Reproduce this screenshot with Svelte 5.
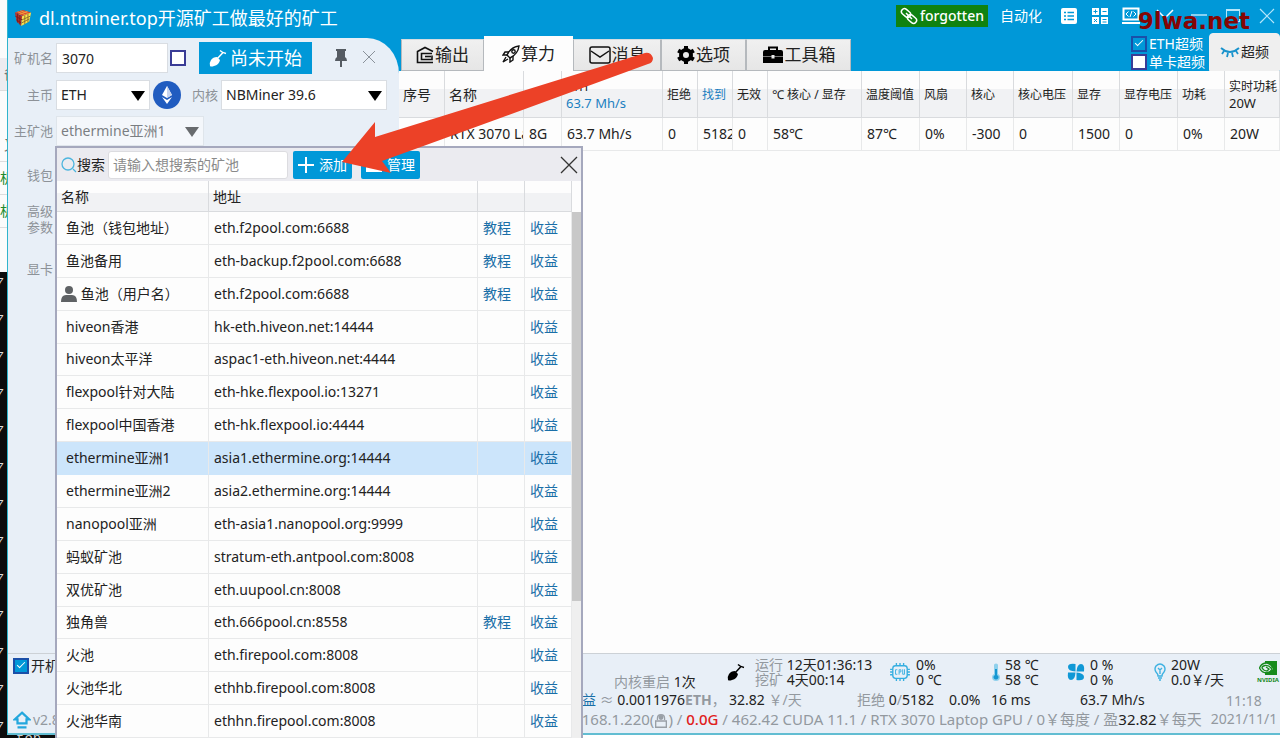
<script lang="ts">
  type Pool = { name: string; url: string; guide?: boolean; user?: boolean };

  const pools: Pool[] = [
    { name: '鱼池（钱包地址）', url: 'eth.f2pool.com:6688', guide: true },
    { name: '鱼池备用', url: 'eth-backup.f2pool.com:6688', guide: true },
    { name: '鱼池（用户名）', url: 'eth.f2pool.com:6688', guide: true, user: true },
    { name: 'hiveon香港', url: 'hk-eth.hiveon.net:14444' },
    { name: 'hiveon太平洋', url: 'aspac1-eth.hiveon.net:4444' },
    { name: 'flexpool针对大陆', url: 'eth-hke.flexpool.io:13271' },
    { name: 'flexpool中国香港', url: 'eth-hk.flexpool.io:4444' },
    { name: 'ethermine亚洲1', url: 'asia1.ethermine.org:14444' },
    { name: 'ethermine亚洲2', url: 'asia2.ethermine.org:14444' },
    { name: 'nanopool亚洲', url: 'eth-asia1.nanopool.org:9999' },
    { name: '蚂蚁矿池', url: 'stratum-eth.antpool.com:8008' },
    { name: '双优矿池', url: 'eth.uupool.cn:8008' },
    { name: '独角兽', url: 'eth.666pool.cn:8558', guide: true },
    { name: '火池', url: 'eth.firepool.com:8008' },
    { name: '火池华北', url: 'ethhb.firepool.com:8008' },
    { name: '火池华南', url: 'ethhn.firepool.com:8008' },
  ];

  const gpuColumns = [
    { title: '序号', value: '', width: 46, big: true },
    { title: '名称', value: 'RTX 3070 Laptop GPU', width: 79, big: true },
    { title: '显存', value: '8G', width: 38 },
    { title: 'ETH', sub: '63.7 Mh/s', value: '63.7 Mh/s', width: 101 },
    { title: '拒绝', value: '0', width: 35 },
    { title: '找到', value: '5182', width: 35, blue: true },
    { title: '无效', value: '0', width: 35 },
    { title: '℃ 核心 / 显存', value: '58℃', width: 94 },
    { title: '温度阈值', value: '87℃', width: 58 },
    { title: '风扇', value: '0%', width: 47 },
    { title: '核心', value: '-300', width: 47 },
    { title: '核心电压', value: '0', width: 59 },
    { title: '显存', value: '1500', width: 47 },
    { title: '显存电压', value: '0', width: 58 },
    { title: '功耗', value: '0%', width: 47 },
    { title: '实时功耗', sub: '20W', value: '20W', width: 55 },
  ];

  const consoleLines = Array(13).fill('7');

  let selected = $state('ethermine亚洲1');
  let search = $state('');
  let rigName = $state('3070');
</script>

<div class="desktop">
  <div class="behind">
    <div class="sheet">
      <span class="cell head">备</span>
      <span class="cell">又</span>
      <span class="cell green">机</span>
      <span class="cell green">机</span>
    </div>
    <div class="console">
      {#each consoleLines as line}
        <span>{line}</span>
      {/each}
    </div>
  </div>

  <div class="window">
    <header class="titlebar">
      <svg class="logo" viewBox="0 0 20 20">
        <path d="M1 4L10 1L19 4L10 8Z" fill="#d9482c" />
        <path d="M1 4L9 8L8 19L3 14Z" fill="#b5302a" />
        <path d="M9 8L19 4L17 14L8 19Z" fill="#f9e04a" />
        <path d="M12 7V17M15.500 5.500V15M9 12L18 8M8.500 15.500L17 11" stroke="#8a6a2a" />
        <path d="M4 5V15M6.500 6.500V17M1.500 8L9 12M2.500 12L8 15.500" stroke="#7a1c1c" />
        <path d="M4 3L13 6.500M7 2L16 5M6 6L15 2.500" stroke="#f0a040" />
      </svg>
      <h1>dl.ntminer.top开源矿工做最好的矿工</h1>
      <button class="user">
        <svg viewBox="0 0 18 18" fill="none" stroke="#fff" stroke-width="1.500">
          <rect x="1" y="3" width="10" height="6" rx="3" transform="rotate(40 6 6)" />
          <rect x="7" y="9" width="10" height="6" rx="3" transform="rotate(40 12 12)" />
          <path d="M6 6L12 12" />
        </svg>
        forgotten
      </button>
      <button class="auto">自动化</button>
      <div class="tools">
        <button aria-label="列表">
          <svg viewBox="0 0 18 18">
            <rect x="1" y="1" width="16" height="16" rx="2" fill="#fff" />
            <path d="M4 5.500H6M4 9H6M4 12.500H6M7.500 5.500H14M7.500 9H14M7.500 12.500H14" stroke="#0098d8" stroke-width="1.500" />
          </svg>
        </button>
        <button aria-label="计算器">
          <svg viewBox="0 0 18 18">
            <path d="M1 1H8V8H1ZM10 1H17V8H10ZM1 10H8V17H1ZM10 10H17V17H10Z" fill="#fff" />
            <path d="M2.500 4.500H6.500M4.500 2.500V6.500M11.500 4.500H15.500M3 12L6 15M6 12L3 15M11.500 12.500H15.500M11.500 15H15.500" stroke="#0098d8" />
          </svg>
        </button>
        <button aria-label="开发">
          <svg viewBox="0 0 18 18" fill="none" stroke="#fff">
            <rect x="1.500" y="1.500" width="15" height="11" stroke-width="2" />
            <path d="M6.500 4.500L4 7L6.500 9.500M11.500 4.500L14 7L11.500 9.500M10 4L8 10" />
            <path d="M0 16H18" stroke-width="2" />
          </svg>
        </button>
        <button aria-label="皮肤">
          <svg viewBox="0 0 18 18" fill="none" stroke="#fff" stroke-width="1.500"><path d="M1 3L9 11L17 3" /></svg>
        </button>
        <button aria-label="最小化">
          <svg viewBox="0 0 18 18" stroke="#b5e6fa" stroke-width="1.500"><path d="M1 8H17" /></svg>
        </button>
        <button aria-label="最大化">
          <svg viewBox="0 0 18 18" fill="none" stroke="#b5e6fa"><rect x="2.500" y="2.500" width="13" height="12" /><path d="M2 3H16" stroke-width="2" /></svg>
        </button>
        <button aria-label="关闭">
          <svg viewBox="0 0 18 18" stroke="#b5e6fa" stroke-width="1.200"><path d="M2 2L16 16M16 2L2 16" /></svg>
        </button>
      </div>
    </header>

    <div class="body">
      <form class="side">
        <div class="row first">
          <label for="rig">矿机名</label>
          <input id="rig" class="field rig" bind:value={rigName} />
          <input type="checkbox" class="check" aria-label="矿机名" />
          <button type="button" class="start">
            <svg viewBox="0 0 18 18" fill="#fff">
              <path d="M8 8L11 11Q10 16 5 17Q2 18 1 17Q0 14 2 11Q4 8 8 8Z" />
              <path d="M8 10L14 3.500M11 1.500Q13 3.500 17 4.500" stroke="#fff" stroke-width="1.500" fill="none" />
            </svg>
            尚未开始
          </button>
          <button type="button" class="icon pin" aria-label="固定">
            <svg viewBox="0 0 14 20" fill="#555b62"><path d="M2 1H12V3H11V9Q13 10 13 13H8V19H6V13H1Q1 10 3 9V3H2Z" /></svg>
          </button>
          <button type="button" class="icon" aria-label="收起">
            <svg viewBox="0 0 14 14" stroke="#8a929a"><path d="M1 1L13 13M13 1L1 13" /></svg>
          </button>
        </div>
        <div class="row">
          <label for="coin">主币</label>
          <div class="select coin">
            <select id="coin" class="field"><option>ETH</option></select>
            <svg viewBox="0 0 14 10"><path d="M0 0H14L7 10Z" /></svg>
          </div>
          <svg class="eth" viewBox="0 0 28 28">
            <circle cx="14" cy="14" r="14" fill="#205cc0" />
            <path d="M14 5L19 14L14 17L9 14Z" fill="#fff" />
            <path d="M9 16L14 19L19 16L14 23Z" fill="#fff" />
            <path d="M14 5V17L19 14Z" fill="#c5d3ee" />
          </svg>
          <label class="kernel" for="kernel">内核</label>
          <div class="select kernel-box">
            <select id="kernel" class="field"><option>NBMiner 39.6</option></select>
            <svg viewBox="0 0 14 10"><path d="M0 0H14L7 10Z" /></svg>
          </div>
        </div>
        <div class="row">
          <label for="pool">主矿池</label>
          <div class="select pool">
            <select id="pool" class="field"><option>ethermine亚洲1</option></select>
            <svg viewBox="0 0 14 10"><path d="M0 0H14L7 10Z" /></svg>
          </div>
        </div>
        <div class="row wallet"><span class="name">钱包</span></div>
        <div class="row"><span class="name">高级<br />参数</span></div>
        <div class="row card"><span class="name">显卡</span></div>
      </form>

      <main>
        <nav>
          <button class="tab output">
            <svg viewBox="0 0 18 18" fill="none" stroke="#111" stroke-width="1.600">
              <path d="M17 16.500H1.500V5.500L9 1.500L17 5.500" />
              <path d="M16 7.500H5.500V13.500H16V9.500" />
              <path d="M9 10.500H15" />
            </svg>
            输出
          </button>
          <button class="tab active">
            <svg viewBox="0 0 18 18" fill="none" stroke="#111" stroke-width="1.400">
              <path d="M5 10Q9 2 17 1Q16 9 8 13Z" />
              <circle cx="11.500" cy="6.500" r="1.700" />
              <path d="M7 7H3L1 10L5 10M11 11V15L8 17V13M4 12L1 17L6 14" />
            </svg>
            算力
          </button>
          <button class="tab message">
            <svg class="wide" viewBox="0 0 22 18" fill="none" stroke="#111" stroke-width="1.500">
              <rect x="1" y="1" width="20" height="16" rx="2" />
              <path d="M2 5L11 11L20 5" />
            </svg>
            消息
          </button>
          <button class="tab option">
            <svg viewBox="0 0 18 18">
              <circle cx="9" cy="9" r="5" fill="none" stroke="#000" stroke-width="4" />
              <path d="M9 0V4M9 14V18M1.200 4.500L4.700 6.500M13.300 11.500L16.800 13.500M1.200 13.500L4.700 11.500M13.300 6.500L16.800 4.500" stroke="#000" stroke-width="4" />
            </svg>
            选项
          </button>
          <button class="tab toolbox">
            <svg class="wide" viewBox="0 0 22 18">
              <path d="M7 4V1.500H15V4" fill="none" stroke="#000" stroke-width="2" />
              <path d="M3 4H19Q21 4 21 6V10H12.500V9H9.500V10H1V6Q1 4 3 4ZM1 10.500H9.500V12.500H12.500V10.500H21V17H1Z" />
            </svg>
            工具箱
          </button>
          <div class="overclock">
            <label><input type="checkbox" class="check" checked />ETH超频</label>
            <label><input type="checkbox" class="check" />单卡超频</label>
          </div>
          <button class="tab oc">
            <svg class="eye" viewBox="0 0 20 14" fill="none" stroke="#1a93cc" stroke-width="1.800">
              <path d="M1 3Q10 11 19 3M4 6L2 9M8 8L7 12M12 8L13 12M16 6L18 9" />
            </svg>
            超频
          </button>
        </nav>

        <table class="gpus">
          <thead>
            <tr>
              {#each gpuColumns as col}
                <th style:width="{col.width}px" class:big={col.big} class:blue={col.blue}>
                  {col.title}
                  {#if col.sub}
                    <span class="sub" class:blue={col.title === 'ETH'}>{col.sub}</span>
                  {/if}
                </th>
              {/each}
            </tr>
          </thead>
          <tbody>
            <tr>
              {#each gpuColumns as col}
                <td>{col.value}</td>
              {/each}
            </tr>
          </tbody>
        </table>
      </main>
    </div>

    <footer>
      <div class="startup">
        <label><input type="checkbox" class="check" checked />开机启动</label>
        <a class="version" href="#version">
          <svg viewBox="0 0 16 16" fill="none" stroke="#23a7dd" stroke-width="2">
            <path d="M8 1.500L14.500 7.500H12V11H4V7.500H1.500ZM4 14.500H12" />
          </svg>
          v2.8
        </a>
      </div>
      <div class="status">
        <div class="stats">
          <div class="restart"><i>内核重启</i> 1次</div>
          <div class="stat uptime">
            <svg viewBox="0 0 18 18">
              <path d="M8 8L11 11Q10 16 5 17Q2 18 1 17Q0 14 2 11Q4 8 8 8Z" />
              <path d="M8 10L14 3.500M11 1.500Q13 3.500 17 4.500" stroke="#000" stroke-width="1.500" fill="none" />
            </svg>
            <p><i>运行</i> 12天01:36:13<br /><i>挖矿</i> 4天00:14</p>
          </div>
          <div class="stat">
            <svg class="wide" viewBox="0 0 22 20" fill="none" stroke="#35aee0" stroke-width="1.500">
              <rect x="3" y="3" width="16" height="14" rx="3" />
              <path d="M7 0V3M11 0V3M15 0V3M7 17V20M11 17V20M15 17V20M0 7H3M0 10H3M0 13H3M19 7H22M19 10H22M19 13H22" />
              <path d="M8 7.500H6V12.500H8M10 13V7.500H12V10H10M14 7V12.500H16V7" stroke-width="1" />
            </svg>
            <p>0%<br />0 ℃</p>
          </div>
          <div class="stat">
            <svg class="thin" viewBox="0 0 8 18">
              <path d="M2 2Q2 0.500 4 0.500T6 2V11Q8 12 8 14Q8 18 4 18T0 14Q0 12 2 11Z" fill="#8fd0ec" />
              <path d="M3 6H5V12Q7 13 6.500 15Q4 18 1.500 15Q1 13 3 12Z" fill="#1597d2" />
            </svg>
            <p>58 ℃<br />58 ℃</p>
          </div>
          <div class="stat">
            <svg viewBox="0 0 18 18" fill="#0f98d6">
              <path d="M8.500 8.500V1Q1 0 1 4T8.500 8.500ZM9.500 8.500H17Q18 1 14 1T9.500 8.500ZM9.500 9.500V17Q17 18 17 14T9.500 9.500ZM8.500 9.500H1Q0 17 4 17T8.500 9.500Z" />
            </svg>
            <p>0 %<br />0 %</p>
          </div>
          <div class="stat">
            <svg class="bulb" viewBox="0 0 12 18" fill="none" stroke="#3fb2e2" stroke-width="1.400">
              <path d="M4 13Q4 11 2 9Q0 6 2 3Q6 -1 10 3Q12 6 10 9Q8 11 8 13ZM4 15H8M5 17H7M6 11V6M4 5L6 7L8 5" />
            </svg>
            <p>20W<br />0.0￥/天</p>
          </div>
          <div class="nvidia">
            <svg viewBox="0 0 18 16">
              <path d="M6 1H18V15H6V12Q10 13 14 9Q10 3 6 4Z" fill="#178a1d" />
              <path d="M6 3Q2 4 0.500 8Q3 13 8 13Q12 12 13 9Q10 5 6 5.500Q3 6 3 8Q5 11 8 11L10 9L7 7" fill="none" stroke="#178a1d" stroke-width="1.300" />
            </svg>
            <b>NVIDIA</b>
          </div>
        </div>
        <div class="lines">
          <div class="line">
            <span class="profit"><a href="#profit">收益</a> <i>≈</i> 0.0011976<i><b>ETH</b>，</i></span>
            <span class="money">32.82 <i>￥/天</i></span>
            <span class="reject"><i>拒绝</i> 0<i>/</i>5182</span>
            <span class="rate">0.0%</span>
            <span class="ping">16 ms</span>
            <span>63.7 Mh/s</span>
          </div>
          <div class="line net">
            <i>192.168.1.220(<svg viewBox="0 0 14 18" fill="none" stroke="#999fa6" stroke-width="1.500"><path d="M3 8V6Q3 2 7 2T11 6V8M1 9H13V16H1Z" /><circle cx="7" cy="5" r="2" fill="#999fa6" /></svg>) /{' '}</i><em>0.0G</em><i>{' '}/ 462.42 CUDA 11.1 / RTX 3070 Laptop GPU / 0￥每度 / 盈</i>32.82<i>￥每天</i>
          </div>
          <div class="clock">11:18<br />2021/11/1</div>
        </div>
      </div>
    </footer>
  </div>

  <div class="under"><span>top.</span></div>

  <section class="popup">
    <div class="toolbar">
      <svg class="glass" viewBox="0 0 16 16" fill="none" stroke="#4db5de" stroke-width="1.300">
        <circle cx="7" cy="7" r="6" /><path d="M12 12L15 15" />
      </svg>
      <label for="search">搜索</label>
      <input id="search" class="search" placeholder="请输入想搜索的矿池" bind:value={search} />
      <button class="add">
        <svg viewBox="0 0 16 16" stroke="#fff" stroke-width="2"><path d="M8 0V16M0 8H16" /></svg>
        添加
      </button>
      <button class="manage">
        <svg viewBox="0 0 16 16" fill="#fff"><path d="M0 1H16V15H0Z" /></svg>
        管理
      </button>
      <button class="close" aria-label="关闭">
        <svg viewBox="0 0 18 18" stroke="#333" stroke-width="1.300"><path d="M1 1L17 17M17 1L1 17" /></svg>
      </button>
    </div>
    <div class="list">
      <table class="pools">
        <thead>
          <tr><th class="c-name">名称</th><th>地址</th><th class="c-guide"></th><th class="c-profit"></th></tr>
        </thead>
        <tbody>
          {#each pools as pool}
            <tr class:selected={pool.name === selected} onclick={() => (selected = pool.name)}>
              <td class="pool-name">
                {#if pool.user}
                  <svg viewBox="0 0 16 16" fill="#5f6265"><circle cx="8" cy="4" r="4" /><path d="M0 16Q0 9 5 9H11Q16 9 16 16Z" /></svg>
                {/if}
                {pool.name}
              </td>
              <td>{pool.url}</td>
              <td>{#if pool.guide}<a href="#guide">教程</a>{/if}</td>
              <td><a href="#income">收益</a></td>
            </tr>
          {/each}
        </tbody>
      </table>
      <div class="scroll"><div class="thumb"></div></div>
    </div>
  </section>

  <svg class="arrow" viewBox="0 0 312 124">
    <path d="M1 111L34 71V86L304 2Q310 1 312 7Q312 12 307 13L99 89L41 110L50 122Z" fill="#ec4127" />
  </svg>
  <div class="watermark">9lwa.net</div>
</div>

<style>
  :global(body) {
    margin: 0;
  }
  .desktop {
    position: relative;
    display: grid;
    grid-template-columns: 7px minmax(0, 1fr);
    grid-template-rows: minmax(0, 1fr) 3px;
    height: 100vh;
    overflow: hidden;
    background: #0c0c0c;
    color: #222;
    font: 14px/16px 'Noto Sans', 'Noto Sans CJK SC', sans-serif;
  }
  button,
  input,
  select {
    font: inherit;
    color: inherit;
    box-sizing: border-box;
    margin: 0;
  }
  button {
    padding: 0;
    border: none;
    background: none;
    white-space: nowrap;
  }
  svg {
    flex: none;
    width: 18px;
    height: 18px;
  }
  svg.wide {
    width: 22px;
  }
  a {
    color: #1a6fa8;
    text-decoration: none;
  }
  i,
  em {
    font-style: normal;
    color: #93999f;
  }

  .behind {
    grid-row: 1 / 3;
    overflow: hidden;
  }
  .sheet {
    height: 272px;
    box-sizing: border-box;
    padding-top: 58px;
    background: #fbfbfb;
  }
  .cell {
    display: block;
    height: 32px;
    padding-left: 4px;
    line-height: 32px;
    border-bottom: 1px solid #ddd;
    color: #777;
    white-space: nowrap;
  }
  .cell.head {
    margin-bottom: 38px;
    background: #ececf0;
  }
  .cell.green {
    padding: 0;
    color: #218a2c;
  }
  .console {
    display: flex;
    flex-direction: column;
    color: #ddd;
    font: italic 12px/24px 'Liberation Mono', monospace;
  }
  .console span {
    height: 37px;
    text-indent: -4px;
  }

  .window {
    display: flex;
    flex-direction: column;
    min-width: 0;
    box-sizing: border-box;
    border-left: 1px solid #2fb4cc;
    border-bottom: 2px solid #62bdd2;
    background: #0098d8;
  }
  .under {
    grid-column: 2;
    background: linear-gradient(90deg, #0c0c0c 560px, #fff 560px);
    overflow: hidden;
  }
  .under span {
    display: block;
    padding-left: 9px;
    color: #ccc;
    font: 14px/8px 'Liberation Mono', monospace;
  }

  .titlebar {
    display: flex;
    align-items: center;
    height: 36px;
    padding: 0 4px 0 6px;
    color: #fff;
  }
  .logo {
    margin-right: 7px;
  }
  h1 {
    flex: 1;
    margin: 0;
    font-size: 18px;
    line-height: 24px;
    font-weight: 400;
  }
  .user {
    display: flex;
    align-items: center;
    gap: 2px;
    height: 22px;
    padding: 0 4px;
    margin-bottom: 4px;
    background: #108210;
    font-weight: 500;
  }
  .auto {
    width: 66px;
    margin-bottom: 4px;
  }
  .tools {
    display: flex;
    gap: 13px;
    margin-left: 6px;
  }
  .tools button {
    height: 18px;
    width: 18px;
    margin-bottom: 4px;
  }
  .tools button:nth-child(n + 4) {
    margin-left: 3px;
  }

  .body {
    flex: 1;
    display: flex;
    min-height: 0;
  }
  .side {
    display: flex;
    flex-direction: column;
    gap: 6px;
    flex: 0 0 391px;
    box-sizing: border-box;
    margin-top: 2px;
    padding-top: 4px;
    border-top-right-radius: 32px 36px;
    background: #e8eff7;
  }
  .row {
    display: flex;
    align-items: center;
    height: 30px;
  }
  .row.first {
    height: 32px;
  }
  .row.wallet {
    height: 46px;
  }
  .row.card {
    height: 58px;
  }
  .row > label,
  .name {
    flex: 0 0 45px;
    margin-right: 3px;
    color: #8d9298;
    font-size: 13px;
    text-align: right;
  }
  .row > label.kernel {
    flex-basis: 37px;
  }
  .field {
    width: 100%;
    height: 30px;
    padding: 0 5px;
    border: 1px solid #d9dde2;
    border-radius: 0;
    background: #fff;
    appearance: none;
  }
  select.field {
    padding: 0 4px;
  }
  .rig {
    width: 112px;
  }
  .check {
    flex: none;
    appearance: none;
    width: 16px;
    height: 16px;
    border: 2px solid #3a3c96;
    background: #fff;
  }
  .check:checked {
    background: #0098d8;
    border-color: #1a4fa8;
  }
  .check:checked::after {
    content: '';
    display: block;
    width: 7px;
    height: 3px;
    margin: 2px;
    border: solid #fff;
    border-width: 0 0 1px 1px;
    transform: rotate(-45deg);
  }
  .row .check {
    margin-left: 2px;
  }
  .start {
    display: flex;
    align-items: center;
    justify-content: center;
    gap: 3px;
    width: 113px;
    height: 32px;
    margin-left: 13px;
    background: #0098d8;
    color: #fff;
    font-size: 18px;
  }
  .icon {
    width: 14px;
    height: 20px;
    margin-left: 14px;
  }
  .icon svg {
    width: 14px;
  }
  .icon.pin {
    margin-left: 22px;
  }
  .icon.pin svg {
    height: 20px;
  }
  .select {
    position: relative;
    width: 94px;
  }
  .select svg {
    position: absolute;
    right: 5px;
    top: 11px;
    width: 14px;
    height: 10px;
    pointer-events: none;
  }
  .select.kernel-box {
    width: 166px;
  }
  .select.pool {
    width: 148px;
    opacity: 0.55;
  }
  .eth {
    width: 28px;
    height: 28px;
    margin-left: 3px;
  }

  main {
    flex: 1;
    min-width: 0;
    display: flex;
    flex-direction: column;
    background: linear-gradient(#0098d8 35px, #fdfdfd 35px);
  }
  nav {
    display: flex;
    align-items: flex-end;
    height: 35px;
    padding-left: 2px;
  }
  .tab {
    display: flex;
    align-items: center;
    justify-content: center;
    gap: 1px;
    width: 83px;
    height: 32px;
    border: 1px solid #b5b9bd;
    border-top-color: #d5dce0;
    background: linear-gradient(#f0f0f0, #e6e6e6);
    color: #222;
    font-size: 17px;
  }
  .tab.active {
    width: 89px;
    height: 35px;
    border-color: #fdfdfd;
    background: #fdfdfd;
  }
  .tab.message {
    width: 88px;
  }
  .tab.option {
    width: 85px;
  }
  .tab.toolbox {
    width: 105px;
  }
  .overclock {
    margin-left: auto;
    margin-right: 4px;
    color: #fff;
  }
  .overclock label,
  .startup label {
    display: flex;
    align-items: center;
    gap: 2px;
    height: 18px;
  }
  .tab.oc {
    width: 71px;
    height: 38px;
    font-size: 14px;
    border-color: #efefef;
    border-radius: 4px 4px 0 0;
    background: #efefef;
  }
  .eye {
    width: 20px;
    height: 14px;
  }

  table {
    border-collapse: separate;
    border-spacing: 0;
    table-layout: fixed;
    width: 100%;
  }
  th {
    box-sizing: border-box;
    text-align: left;
    font-weight: 400;
    border: solid #d9dbde;
    border-width: 0 1px 1px 0;
    background: linear-gradient(#fdfdfd 40%, #f1f2f4 40%);
  }
  td {
    border: solid #e8e9ea;
    border-width: 0 1px 1px 0;
    overflow: hidden;
    white-space: nowrap;
  }
  .gpus th {
    height: 47px;
    padding: 2px 0 0 4px;
    font-size: 12px;
    white-space: nowrap;
    overflow: hidden;
  }
  .gpus th.big {
    font-size: 14px;
  }
  .gpus td {
    height: 33px;
    padding: 0 0 0 5px;
    box-sizing: border-box;
  }
  .sub {
    display: block;
    font-size: 13px;
  }
  .blue {
    color: #1c7fc0;
  }

  footer {
    display: flex;
    height: 80px;
    box-sizing: border-box;
    border-top: 1px solid #ccd1d6;
    background: #e8eff7;
  }
  .startup {
    display: flex;
    flex-direction: column;
    justify-content: space-between;
    flex: 0 0 544px;
    box-sizing: border-box;
    padding: 3px 5px 4px;
  }
  .version {
    display: flex;
    align-items: center;
    gap: 2px;
    color: #93999f;
  }
  .status {
    flex: 1;
    min-width: 0;
    white-space: nowrap;
  }
  .stats {
    display: grid;
    grid-template-columns: 113px 162px 103px 75px 87px 102px 1fr;
    height: 36px;
    padding-left: 62px;
  }
  .stats p {
    margin: 0;
    line-height: 15px;
  }
  .restart {
    align-self: end;
  }
  .stat {
    display: flex;
    align-items: center;
    gap: 5px;
  }
  .stat.uptime {
    gap: 10px;
  }
  .stat .thin {
    width: 8px;
  }
  .stat .bulb {
    width: 12px;
  }
  .nvidia {
    display: flex;
    flex-direction: column;
    align-items: center;
    justify-content: center;
    color: #178a1d;
    font-size: 6px;
    line-height: 8px;
  }
  .nvidia svg {
    height: 16px;
  }
  .lines {
    display: grid;
    grid-template-columns: minmax(0, 1fr) 72px;
    grid-template-rows: 20px 20px;
    align-items: center;
  }
  .line {
    display: flex;
    align-items: center;
    padding-left: 16px;
  }
  .line.net {
    grid-row: 2;
    display: block;
    padding-left: 0;
    font-size: 15px;
  }
  .net svg {
    width: 14px;
    height: 16px;
    vertical-align: -4px;
  }
  .net em {
    color: #e02020;
    font-weight: 500;
  }
  .profit {
    width: 161px;
  }
  .money {
    width: 128px;
  }
  .reject {
    width: 92px;
  }
  .rate {
    width: 42px;
  }
  .ping {
    width: 89px;
  }
  .clock {
    grid-column: 2;
    grid-row: 1 / 3;
    color: #93999f;
    text-align: center;
    line-height: 18px;
    overflow: hidden;
  }

  .popup {
    position: absolute;
    left: 55px;
    top: 146px;
    bottom: 0;
    width: 528px;
    display: flex;
    flex-direction: column;
    box-sizing: border-box;
    border: 2px solid #a5a8bd;
    border-bottom: none;
    background: #fdfdfd;
  }
  .toolbar {
    display: flex;
    align-items: center;
    height: 33px;
    padding: 0 3px 0 4px;
    background: #ebebf0;
  }
  .glass {
    width: 16px;
    height: 16px;
  }
  .search {
    width: 180px;
    height: 28px;
    margin: 0 5px 0 3px;
    padding: 0 4px;
    border: 1px solid #dcdce0;
    border-radius: 3px;
    background: #fff;
  }
  .search::placeholder {
    color: #8a8a8a;
  }
  .add,
  .manage {
    display: flex;
    align-items: center;
    justify-content: center;
    gap: 5px;
    width: 59px;
    height: 28px;
    margin-right: 9px;
    border-radius: 2px;
    background: #0098d8;
    color: #fff;
  }
  .add svg,
  .manage svg {
    width: 16px;
    height: 16px;
  }
  .close {
    width: 18px;
    height: 18px;
    margin-left: auto;
  }
  .list {
    flex: 1;
    display: flex;
    min-height: 0;
  }
  .pools {
    height: 100%;
  }
  .pools th {
    height: 31px;
    padding: 2px 4px 0;
  }
  .pools td {
    padding: 0 5px;
  }
  .pools td.pool-name {
    padding-left: 9px;
  }
  .pool-name svg {
    width: 16px;
    height: 16px;
    margin-left: -5px;
    vertical-align: -3px;
  }
  .c-name {
    width: 152px;
  }
  .c-guide,
  .c-profit {
    width: 47px;
  }
  .selected td {
    background: #cce5fb;
    border-bottom-color: #cce5fb;
  }
  .scroll {
    flex: 0 0 9px;
    padding-top: 31px;
    background: linear-gradient(#fdfdfd 31px, #efefef 31px);
  }
  .thumb {
    height: 74%;
    background: #c8c8c8;
  }

  .arrow {
    position: absolute;
    left: 341px;
    top: 51px;
    width: 312px;
    height: 124px;
    pointer-events: none;
  }
  .watermark {
    position: absolute;
    right: 30px;
    top: 7px;
    color: #850505;
    font: bold 23px/28px 'DejaVu Sans', sans-serif;
  }
</style>
